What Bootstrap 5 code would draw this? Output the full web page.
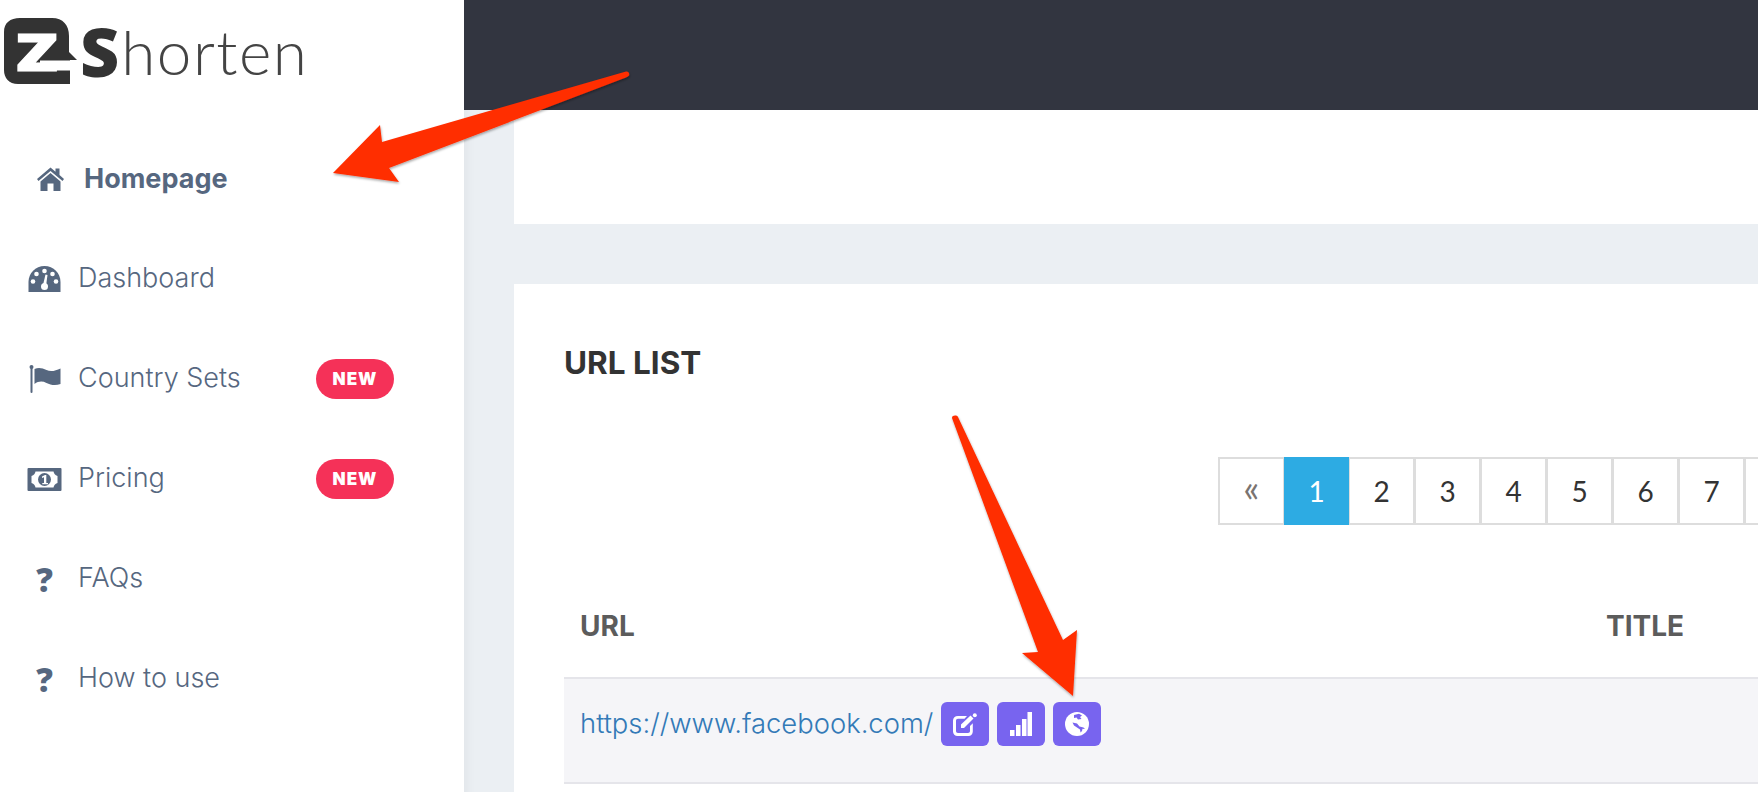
<!DOCTYPE html>
<html lang="en">
<head>
  <meta charset="UTF-8">
  <meta name="viewport" content="width=device-width, initial-scale=1">
  <title>ZShorten</title>
  <link href="https://cdn.jsdelivr.net/npm/bootstrap@5.3.3/dist/css/bootstrap.min.css" rel="stylesheet">
  <style>
    html, body { height: 100%; overflow: hidden; }
    body { font-family: Inter, "Liberation Sans", sans-serif; font-weight: 300; background: #fff; }
    .page-wrap { width: 1758px; height: 792px; }

    .side-panel { width: 464px; flex: none; background: #fff; }
    .logo-area { height: 129px; padding: 18px 0 0 4px; }
    .logo-mark { width: 76px; height: 66px; flex: none; overflow: visible; }
    .logo-z { font-family: "Open Sans", sans-serif; font-weight: 800; font-size: 52px; fill: #fff; stroke: #fff; stroke-width: 1; }
    .logo-s { font-family: "Open Sans", sans-serif; font-weight: 800; font-size: 68px; line-height: 66px; color: #333; letter-spacing: -1px; }
    .logo-rest { font-family: Lato, sans-serif; font-weight: 300; font-size: 62px; line-height: 66px; color: #444; letter-spacing: 1.5px; margin-left: 3px; }

    .side-link { height: 100px; padding: 0 70px 0 27px; color: #56677f; font-size: 27px; gap: 16px; }
    .side-link:hover { color: #56677f; }
    .side-link.active-link { padding-left: 33px; font-weight: 700; color: #56677f; }
    .side-label { padding-bottom: 2px; }
    .active-link .side-label { padding-bottom: 0; }
    .side-icon { width: 35px; flex: none; fill: #56677f; }
    .side-q { font-family: "Open Sans", sans-serif; font-weight: 800; font-size: 33px; line-height: 1; text-align: center; }
    .new-pill { width: 78px; height: 40px; background: #f53158; font-family: Inter, sans-serif; font-weight: 900; font-size: 17px; letter-spacing: 1px; line-height: 40px; padding: 0; }

    .top-strip { height: 110px; background: #323540; flex: none; }
    .main-area { background: #ebeff3; padding-left: 50px; box-shadow: inset 14px 0 12px -12px rgba(0,0,0,.05); }
    .blank-card { height: 114px; border: 0; border-radius: 0; flex: none; }
    .list-card { border: 0; border-radius: 0; margin-top: 60px; padding-left: 50px; }

    .list-title { font-family: Inter, sans-serif; font-weight: 700; font-size: 31.5px; color: #333; margin: 60px 0 0; line-height: 38px; }
    .pager { padding: 0 0 0 654px; margin: 75px 0 0; flex-wrap: nowrap; }
    .pager .page-link { width: 67px; height: 68px; padding: 0; margin-left: -2px; border: 2px solid #ddd; border-radius: 0 !important; color: #333; font-family: Lato, sans-serif; font-weight: 400; font-size: 28px; line-height: 64px; text-align: center; background: #fff; }
    .pager .page-item:first-child .page-link { margin-left: 0; width: 67px; color: #7a7470; font-size: 38px; line-height: 56px; }
    .pager .page-item.active .page-link { width: 65px; background: #2dabe3; border-color: #2dabe3; color: #fff; }

    .url-table { table-layout: fixed; width: 1194px; margin: 49px 0 0 0; }
    .url-table > :not(caption) > * > * { padding: 0 16px; }
    .url-table th { height: 104px; vertical-align: middle; font-family: Inter, sans-serif; font-size: 28px; font-weight: 700; color: #5c5c5c; border: 0; }
    .url-table td { height: 105px; vertical-align: middle; background: #f5f5f8; border-top: 2px solid #e5e5ea; border-bottom: 2px solid #e5e5ea; box-shadow: none; }
    .url-table > tbody > tr > td { padding-bottom: 13px; }
    .col-url { width: 1026px; }
    .url-text { color: #337ab7; font-size: 27.4px; text-decoration: none; }
    .tool-btn { width: 48px; height: 44px; padding: 0; background: #7864ef; border: 0; border-radius: 6px; }
    .tool-btn svg { fill: #fff; display: block; margin: auto; }

    .note-arrows { position: absolute; left: 0; top: 0; pointer-events: none; }
  </style>
</head>
<body>

  <div class="page-wrap d-flex position-relative">

    <aside class="side-panel d-flex flex-column">
      <div class="logo-area d-flex align-items-start">
        <svg class="logo-mark" viewBox="0 0 76 66">
          <path fill="#333" d="M16 0H48C59 0 65 7 65 18V34L73 42H66V66H14C5 66 0 60 0 52V14C0 5 6 0 16 0Z"/>
          <rect fill="#fff" x="36" y="42.500" width="40" height="10"/>
          <text class="logo-z" transform="translate(12 52.500) scale(1.32 1)">Z</text>
        </svg>
        <span class="logo-s">S</span><span class="logo-rest">horten</span>
      </div>

      <nav class="nav flex-column">
        <a class="nav-link side-link active-link d-flex align-items-center" href="#">
          <svg class="side-icon" height="24" viewBox="0 0 28 24"><path d="M14 6 4 14.5V24H11V16.500H17V24H24V14.5Z"/><path d="M14 .5 .5 12 2 14 14 4 26 14 27.5 12 23 8V1.500H19V4.800Z"/></svg>
          <span class="side-label">Homepage</span>
        </a>
        <a class="nav-link side-link d-flex align-items-center" href="#">
          <svg class="side-icon" height="26" viewBox="0 0 32 26">
            <path d="M0 26V16C0 7 7 0 16 0S32 7 32 16V26Z"/>
            <g fill="#fff"><circle cx="16" cy="5" r="2.300"/><circle cx="8" cy="8" r="2.300"/><circle cx="24" cy="8" r="2.300"/><circle cx="4.500" cy="15.500" r="2.300"/><circle cx="27.500" cy="15.500" r="2.300"/><circle cx="16" cy="20.500" r="3.500"/><path d="M14.500 19 17 8.500 19 9 17.500 20Z"/></g>
          </svg>
          <span class="side-label">Dashboard</span>
        </a>
        <a class="nav-link side-link d-flex align-items-center" href="#">
          <svg class="side-icon" height="28" viewBox="0 0 32 28">
            <rect x="2" y="2" width="2" height="26" rx="1"/><circle cx="3" cy="2" r="2"/>
            <path d="M6 4C10 2 14 3 18 5S27 6 32 3.500V19C27 21 22 20 18 18S10 16 6 19Z"/>
          </svg>
          <span class="side-label">Country Sets</span>
          <span class="badge rounded-pill new-pill ms-auto">NEW</span>
        </a>
        <a class="nav-link side-link d-flex align-items-center" href="#">
          <svg class="side-icon" height="23" viewBox="0 0 34 23">
            <rect width="34" height="23" rx="1"/>
            <path fill="#fff" d="M8 3.500H26C26.500 6 27.500 7 30 8V15C27.500 16 26.500 17 26 19.500H8C7.500 17 6.500 16 4 15V8C6.500 7 7.500 6 8 3.500Z"/>
            <circle cx="17" cy="11.500" r="6.500"/>
            <path fill="#fff" d="M14.500 8.500 17.500 7H18.800V15H20.500V16.200H14.800V15H16.500V9.200L14.500 10Z"/>
          </svg>
          <span class="side-label">Pricing</span>
          <span class="badge rounded-pill new-pill ms-auto">NEW</span>
        </a>
        <a class="nav-link side-link d-flex align-items-center" href="#">
          <span class="side-icon side-q">?</span>
          <span class="side-label">FAQs</span>
        </a>
        <a class="nav-link side-link d-flex align-items-center" href="#">
          <span class="side-icon side-q">?</span>
          <span class="side-label">How to use</span>
        </a>
      </nav>
    </aside>

    <div class="flex-grow-1 d-flex flex-column overflow-hidden">
      <div class="top-strip"></div>
      <div class="main-area flex-grow-1 d-flex flex-column">
        <div class="card blank-card"></div>
        <div class="card list-card flex-grow-1 overflow-hidden">
          <h5 class="list-title">URL LIST</h5>

          <ul class="pagination pager">
            <li class="page-item"><a class="page-link" href="#">«</a></li>
            <li class="page-item active"><a class="page-link" href="#">1</a></li>
            <li class="page-item"><a class="page-link" href="#">2</a></li>
            <li class="page-item"><a class="page-link" href="#">3</a></li>
            <li class="page-item"><a class="page-link" href="#">4</a></li>
            <li class="page-item"><a class="page-link" href="#">5</a></li>
            <li class="page-item"><a class="page-link" href="#">6</a></li>
            <li class="page-item"><a class="page-link" href="#">7</a></li>
            <li class="page-item"><a class="page-link" href="#"></a></li>
          </ul>

          <table class="table url-table">
            <thead>
              <tr><th class="col-url">URL</th><th>TITLE</th></tr>
            </thead>
            <tbody>
              <tr>
                <td>
                  <div class="d-flex align-items-center gap-2">
                    <a class="url-text" href="#">https://www.facebook.com/</a>
                    <button class="btn tool-btn" type="button">
                      <svg width="24" height="23" viewBox="0 0 24 23">
                        <path d="M5 3H14L11.500 5.800H5C3.800 5.800 3 6.600 3 7.800V18C3 19.200 3.800 20 5 20H15C16.200 20 17 19.200 17 18V13L19.800 10.200V18.500C19.800 21 18 23 15.500 23H4.500C2 23 0 21 0 18.500V7.500C0 5 2 3 5 3Z"/>
                        <path d="M8 11.500 17.500 2.500 20.500 5.500 11 15H8Z"/><circle cx="21.800" cy="2.200" r="2"/>
                      </svg>
                    </button>
                    <button class="btn tool-btn" type="button">
                      <svg width="22" height="24" viewBox="0 0 22 24">
                        <rect x="0" y="18" width="4.500" height="6"/><rect x="6" y="13" width="4.500" height="11"/><rect x="12" y="7" width="4.500" height="17"/><rect x="17.500" y="0" width="4.500" height="24"/>
                      </svg>
                    </button>
                    <button class="btn tool-btn" type="button">
                      <svg width="24" height="24" viewBox="0 0 24 24">
                        <circle cx="12" cy="12" r="12"/>
                        <path fill="#7864ef" d="M9 3 14 1.800 17 3.500 15 5 16.500 7 13 7.500 11.500 5.500 9 6Z"/>
                        <path fill="#7864ef" d="M7.500 10.500 12 11.500 14.500 14.500 18.500 15.500 20 17 17.500 16.800 17 19 15.500 20.500 15 17.500 12 15.500 9 13.500Z"/>
                      </svg>
                    </button>
                  </div>
                </td>
                <td></td>
              </tr>
            </tbody>
          </table>
        </div>
      </div>
    </div>

    <!-- the red annotation arrows sit on top of everything -->
    <svg class="note-arrows" width="1758" height="792" viewBox="0 0 1758 792">
      <defs>
        <filter id="arrowShade" x="-10%" y="-10%" width="120%" height="120%">
          <feDropShadow dx="0.500" dy="1.500" stdDeviation="1.200" flood-color="#000" flood-opacity=".35"/>
        </filter>
      </defs>
      <g fill="#ff2d00" filter="url(#arrowShade)">
        <path d="M626 71.500C628 71 630 73 629 75.500 628 76.500 627 77 626 77.500L389 168 399 182 333 173 380 125 382 142Z"/>
        <path d="M952 418C952 415 957 415 958 417L1063 640 1077 630 1073 696 1022 653 1038 652Z"/>
      </g>
    </svg>
  </div>

  <script src="https://cdn.jsdelivr.net/npm/bootstrap@5.3.3/dist/js/bootstrap.bundle.min.js"></script>
</body>
</html>
